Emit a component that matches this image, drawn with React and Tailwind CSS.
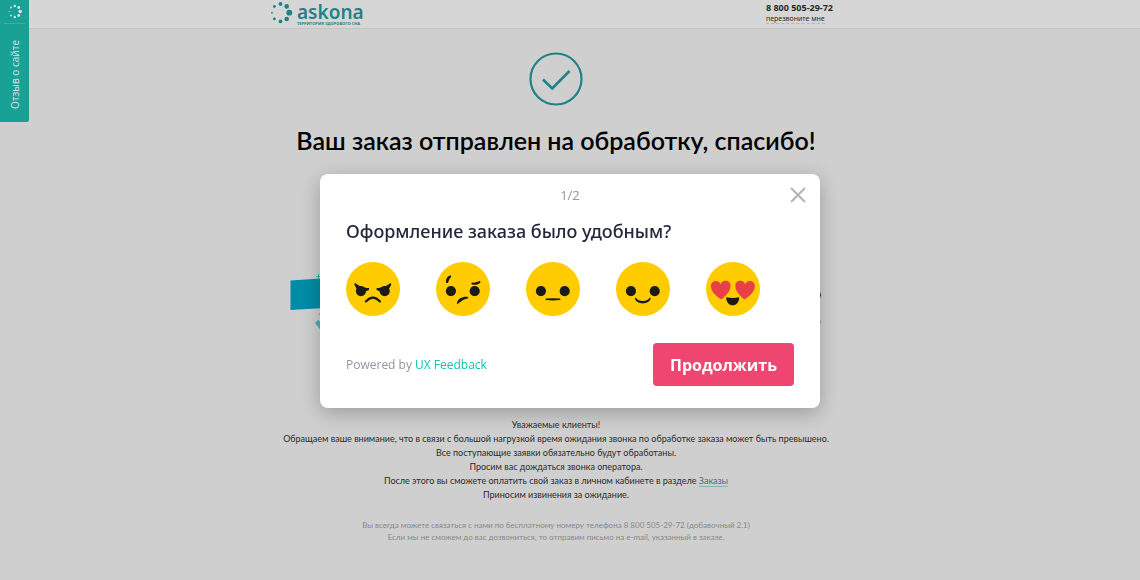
import React, { useState } from 'react';

const Eyes = () => (
  <>
    <circle cx="15.2" cy="29.6" r="5.2" />
    <circle cx="39.4" cy="29.6" r="5.2" />
  </>
);

const faces = [
  {
    label: 'Ужасно',
    drawing: (
      <>
        <Eyes />
        <path d="M9.2 21.4c4.200 3.200 8 4.800 14.200 5.200v2l-3.600 1.400-9-2.800-2.400-4.400z" />
        <path d="M45.400 21.400c-4.200 3.200-8 4.800-14.200 5.200v2l3.600 1.400 9-2.800 2.400-4.400z" />
        <path d="M20.2 40.300q7.200-8 14.400 0" fill="none" stroke="#1a1a1a" strokeWidth="2.2" strokeLinecap="round" />
      </>
    ),
  },
  {
    label: 'Плохо',
    drawing: (
      <>
        <Eyes />
        <path d="M10.4 21.4c-1-3.600 1.200-7.300 4.700-8l.4 1.600c-1.700 1.700-2.400 3.600-3.300 6.400z" />
        <path d="M36.2 21c3.600.6 6-.7 8.700-1.800l.4 1.300c-2 2.700-6 3.300-9.100 2.200z" />
        <path d="M21.2 42.300c1-5.700 7-7.600 11.500-6.700v1.600c-5 .2-7 3.700-11.100 5.500z" />
      </>
    ),
  },
  {
    label: 'Нормально',
    drawing: (
      <>
        <Eyes />
        <path d="M20.600 37.200q7-.4 13.800 0c1 .2 1 1.400 0 1.600q-6.900.8-13.800 0c-1-.2-1-1.400 0-1.600z" />
      </>
    ),
  },
  {
    label: 'Хорошо',
    drawing: (
      <>
        <Eyes />
        <path d="M20 36.200c3 4.800 11.600 4.800 14.600 0l.8.8c-1.800 7-14.400 7-16.200 0z" />
      </>
    ),
  },
  {
    label: 'Отлично',
    drawing: (
      <>
        <g fill="#e84046">
          <path d="M15.600 38.200C9.500 34 5 29.500 5 24.600c0-5.800 7.600-7.200 9.800-2 1.800-5.200 10.200-4.400 10.200 1.600 0 5-4.400 9.800-9.400 14z" />
          <path d="M39.200 38.200c6.100-4.200 10.600-8.700 10.600-13.600 0-5.800-7.600-7.200-9.800-2-1.800-5.200-10.200-4.400-10.200 1.600 0 5 4.400 9.800 9.400 14z" />
        </g>
        <path d="M20.600 35.800q6.600 1.600 13.200 0c0 11-13.200 11-13.200 0z" />
      </>
    ),
  },
];

const Face = ({ label, active, onClick, children }) => (
  <button type="button" aria-label={label} aria-pressed={active} onClick={onClick} className="rounded-full cursor-pointer">
    <svg viewBox="0 0 55 55" className="block size-[54px]" fill="#1a1a1a">
      <circle cx="27.5" cy="27.5" r="27.5" fill="#ffcc00" />
      {children}
    </svg>
  </button>
);

const Logo = () => (
  <a href="#" aria-label="Askona" className="flex gap-1 text-[#1f8285]">
    <svg viewBox="0 0 22 24" className="w-[22px] h-6" fill="currentColor">
      <circle cx="18.3" cy="12.7" r="2.9" />
      <circle cx="15.7" cy="6.4" r="2.3" />
      <circle cx="9.5" cy="4" r="1.9" />
      <circle cx="3.4" cy="6.5" r="1.4" />
      <circle cx="1" cy="12.7" r="0.9" />
      <circle cx="3.4" cy="19" r="1.4" />
      <circle cx="9.5" cy="21.4" r="1.9" />
      <circle cx="15.7" cy="19" r="2.3" />
    </svg>
    <span className="flex flex-col pt-1">
      <span className="font-['Noto_Sans'] font-semibold text-[19px] leading-[17px]">askona</span>
      <span className="font-bold text-[4px] leading-[5px] whitespace-nowrap">ТЕРРИТОРИЯ ЗДОРОВОГО СНА</span>
    </span>
  </a>
);

const FeedbackTab = () => (
  <button
    type="button"
    className="fixed top-0 left-0 w-[29px] h-[122px] flex flex-col items-center rounded-br-xs bg-[#1aa196] text-[#d3e4e2] px-1"
  >
    <svg viewBox="0 0 20 23" className="w-5 h-[23px] shrink-0" fill="currentColor">
      <circle cx="15.2" cy="11.5" r="1.8" />
      <circle cx="13.7" cy="7.5" r="1.4" />
      <circle cx="9.8" cy="6" r="1.2" />
      <circle cx="6" cy="7.5" r="0.9" />
      <circle cx="4.3" cy="11.5" r="0.6" />
      <circle cx="6" cy="15.5" r="0.9" />
      <circle cx="9.8" cy="17" r="1.2" />
      <circle cx="13.7" cy="15.5" r="1.4" />
    </svg>
    <span className="w-full border-t border-[#3fb0a7]" />
    <span className="mt-4 text-[10px] leading-4 whitespace-nowrap [writing-mode:vertical-rl] rotate-180">
      Отзыв о сайте
    </span>
  </button>
);

const SurveyModal = ({ onClose }) => {
  const [rating, setRating] = useState(null);

  return (
    <div className="fixed inset-0 flex items-center justify-center pt-0.5 pointer-events-none">
      <div
        role="dialog"
        aria-labelledby="survey-question"
        className="pointer-events-auto w-full max-w-[500px] rounded-lg bg-white px-[26px] pt-2 pb-[22px] shadow-[0_5px_20px_rgba(0,0,0,0.25)]"
      >
        <div className="grid grid-cols-[1fr_auto_1fr] items-center h-[26px]">
          <span className="col-start-2 text-[13px] leading-5 text-[#8f96a3]">1/2</span>
          <button type="button" aria-label="Закрыть" onClick={onClose} className="justify-self-end -mr-3 text-[#b1b7bf] cursor-pointer">
            <svg viewBox="0 0 16 16" className="size-4" fill="none" stroke="currentColor" strokeWidth="2.2">
              <path d="M1 1l14 14M15 1L1 15" />
            </svg>
          </button>
        </div>

        <h2 id="survey-question" className="mt-2.5 text-[18px] leading-[26px] font-['Noto_Sans',sans-serif] font-medium text-[#22273a]">
          Оформление заказа было удобным?
        </h2>

        <div className="flex gap-9 mt-[18px]">
          {faces.map((face, i) => (
            <Face key={face.label} label={face.label} active={rating === i} onClick={() => setRating(i)}>
              {face.drawing}
            </Face>
          ))}
        </div>

        <div className="flex items-center justify-between mt-[27px]">
          <p className="text-[12px] leading-4 text-[#8f96a3]">
            Powered by <a href="#" className="text-[#12c2b3]">UX Feedback</a>
          </p>
          <button type="button" className="h-[43px] px-[17px] rounded bg-[#ee4671] text-white text-[16px] font-bold cursor-pointer">
            Продолжить
          </button>
        </div>
      </div>
    </div>
  );
};

const App = () => {
  const [open, setOpen] = useState(true);

  return (
    <div className="min-h-screen bg-[#cfcfcf] font-['Open_Sans',sans-serif] text-[#2b2b2b]">
      <header className="bg-[#d6d6d6] border-b border-[#c5c5c5] pr-7">
        <div className="max-w-[570px] h-7 mx-auto flex justify-between pr-2">
          <Logo />
          <div className="flex flex-col items-start pt-0.5 font-['Noto_Sans',sans-serif]">
            <a href="tel:88005052972" className="font-bold text-[9px] leading-3">8 800 505-29-72</a>
            <a href="#" className="text-[7px] leading-[9px] border-b border-dashed border-[#b5b5b5]">перезвоните мне</a>
          </div>
        </div>
      </header>

      <main className="pr-7 flex flex-col items-center text-center font-['Lato',sans-serif]">
        <svg viewBox="0 0 54 54" className="size-[54px] mt-[23px]" fill="none" stroke="#1f8285">
          <circle cx="27" cy="27" r="25.5" strokeWidth="2.2" />
          <path d="M14 27.5l9.2 9L40.5 19" strokeWidth="2.6" />
        </svg>
        <h1 className="mt-[18px] text-[25px] leading-8 font-semibold text-black">Ваш заказ отправлен на обработку, спасибо!</h1>

        {/* promo banner, mostly hidden under the survey */}
        <svg viewBox="0 0 532 60" className="w-[532px] h-[60px] mt-[116px]">
          <path d="M0.5 8.500l60-4v30L0.5 38z" fill="#008ca6" />
          <path d="M26 4h2v-2h1v2h2v1h-2v2h-1v-2h-2z" fill="#46aebb" />
          <path d="M25 51l3-3 12 8v6h-6zM28 42l4-1v3z" fill="#46aebb" />
          <path d="M529 19q4 4 0 8zM529 47q3 3 0 6z" fill="#333" />
        </svg>

        <div className="mt-[86px] text-[9px] leading-[14px]">
          <p>Уважаемые клиенты!</p>
          <p>Обращаем ваше внимание, что в связи с большой нагрузкой время ожидания звонка по обработке заказа может быть превышено.</p>
          <p>Все поступающие заявки обязательно будут обработаны.</p>
          <p>Просим вас дождаться звонка оператора.</p>
          <p>
            После этого вы сможете оплатить свой заказ в личном кабинете в разделе{' '}
            <a href="#" className="text-[#45727b] border-b border-[#7fb3b8]">Заказы</a>
          </p>
          <p>Приносим извинения за ожидание.</p>
        </div>

        <div className="mt-[17px] text-[8px] leading-3 text-[#888888]">
          <p>Вы всегда можете связаться с нами по бесплатному номеру телефона 8 800 505-29-72 (добавочный 2.1)</p>
          <p>Если мы не сможем до вас дозвониться, то отправим письмо на e-mail, указанный в заказе.</p>
        </div>
      </main>

      <FeedbackTab />
      {open && <SurveyModal onClose={() => setOpen(false)} />}
    </div>
  );
};

export default App;
